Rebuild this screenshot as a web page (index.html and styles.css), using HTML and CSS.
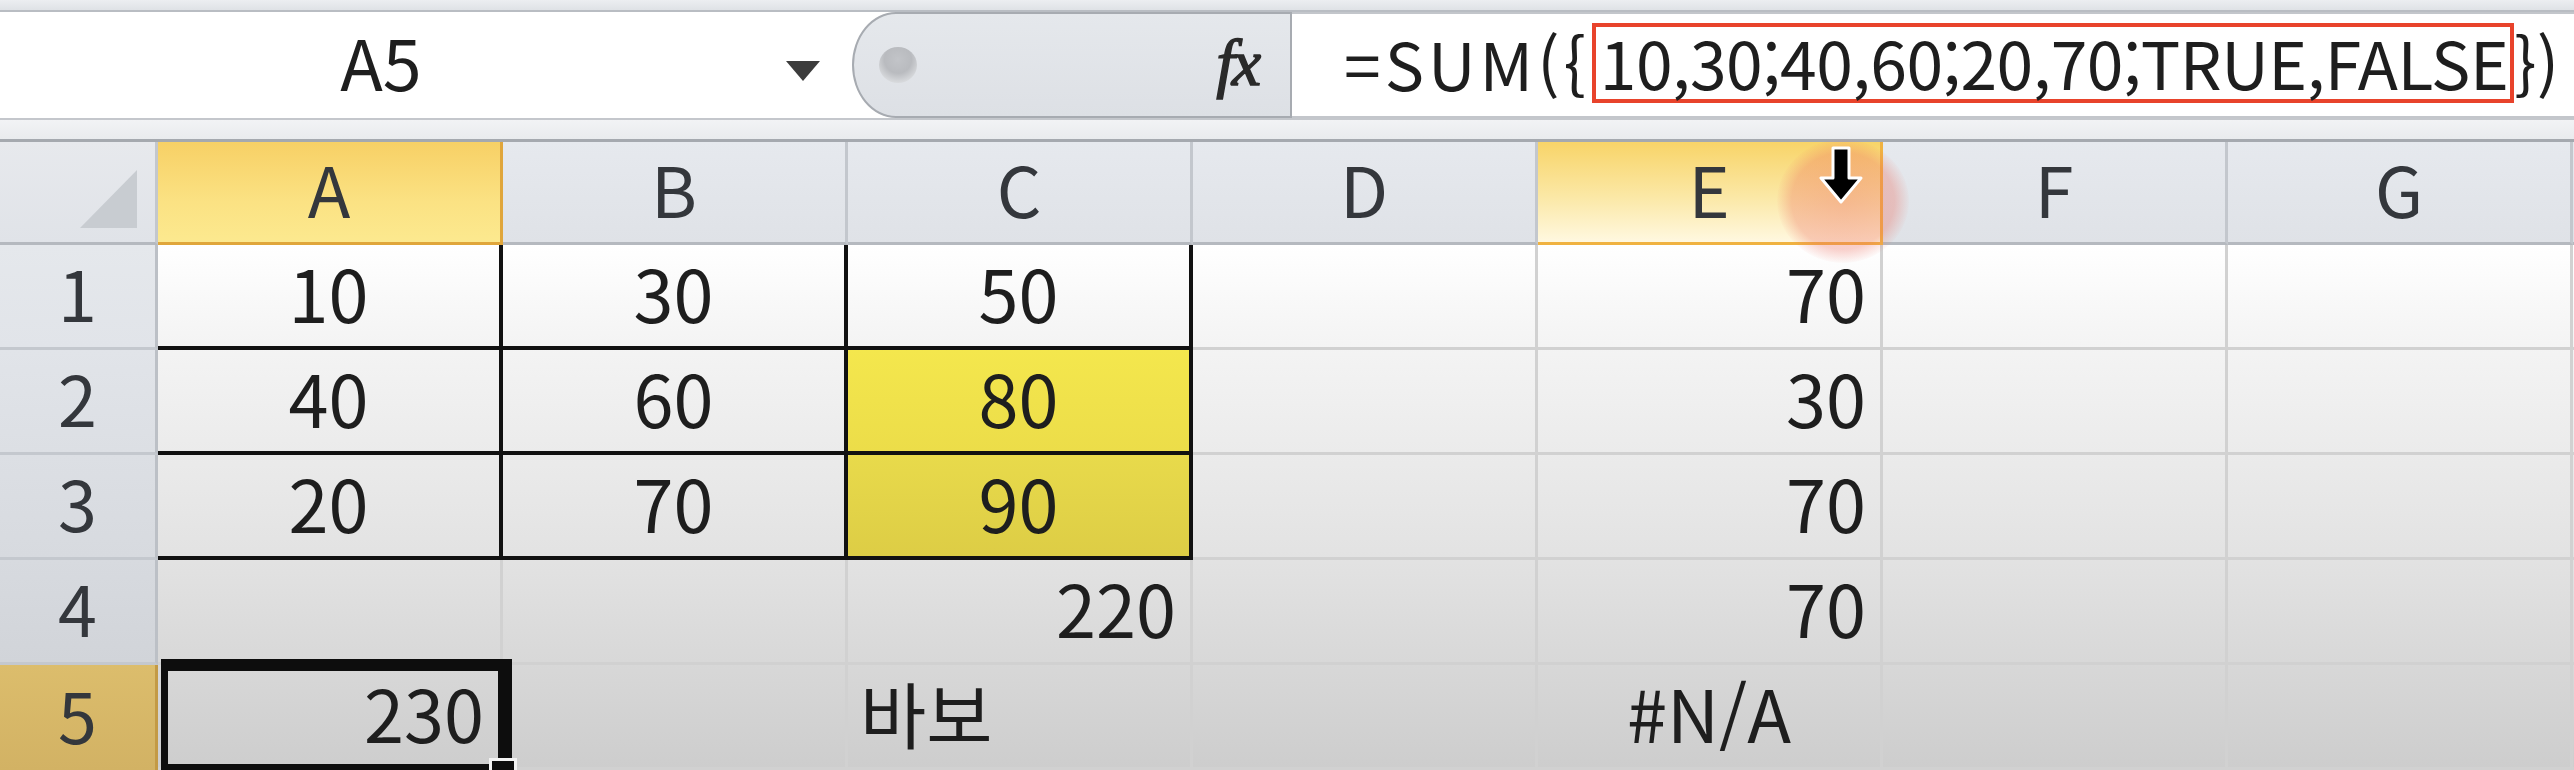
FILE: index.html
```html
<!DOCTYPE html>
<html lang="ko">
<head>
<meta charset="utf-8">
<title>Excel SUM array</title>
<link rel="stylesheet" href="styles.css">
</head>
<body>
<div class="app">
  <div class="topband"></div>
  <div class="fbar">
    <div class="namebox">
      <span class="name">A5</span>
      <span class="dd"></span>
    </div>
    <div class="fxzone">
      <span class="knob"></span>
      <span class="fx">fx</span>
    </div>
    <div class="formula"><span class="pre">=SUM({</span><span class="hl">10,30;40,60;20,70;TRUE,FALSE</span>})</div>
  </div>
  <div class="band"></div>
  <div class="sheet">
    <div class="corner"></div>
    <div class="ch sel">A</div>
    <div class="ch">B</div>
    <div class="ch">C</div>
    <div class="ch">D</div>
    <div class="ch hov">E</div>
    <div class="ch">F</div>
    <div class="ch">G</div>
    <div class="ch rest"></div>

    <div class="rh r1">1</div>
    <div class="cell c bk">10</div>
    <div class="cell c bk">30</div>
    <div class="cell c bk">50</div>
    <div class="cell"></div>
    <div class="cell r">70</div>
    <div class="cell"></div>
    <div class="cell"></div>
    <div class="cell rest"></div>

    <div class="rh r2">2</div>
    <div class="cell c bk">40</div>
    <div class="cell c bk">60</div>
    <div class="cell c bk y1">80</div>
    <div class="cell"></div>
    <div class="cell r">30</div>
    <div class="cell"></div>
    <div class="cell"></div>
    <div class="cell rest"></div>

    <div class="rh r3">3</div>
    <div class="cell c bk">20</div>
    <div class="cell c bk">70</div>
    <div class="cell c bk y2">90</div>
    <div class="cell"></div>
    <div class="cell r">70</div>
    <div class="cell"></div>
    <div class="cell"></div>
    <div class="cell rest"><span class="mark m1"></span></div>

    <div class="rh r4">4</div>
    <div class="cell"></div>
    <div class="cell"></div>
    <div class="cell r">220</div>
    <div class="cell"></div>
    <div class="cell r">70</div>
    <div class="cell"></div>
    <div class="cell"></div>
    <div class="cell rest"><span class="mark m2"></span></div>

    <div class="rh r5 selr">5</div>
    <div class="cell r a5">230</div>
    <div class="cell"></div>
    <div class="cell l">바보</div>
    <div class="cell"></div>
    <div class="cell c">#N/A</div>
    <div class="cell"></div>
    <div class="cell"></div>
    <div class="cell rest"></div>
  </div>

  <div class="selbox"></div>
  <div class="handle"></div>
  <div class="halo"></div>
  <svg class="cursor" width="46" height="60" viewBox="0 0 46 60">
    <path d="M14 2 H30 V32 H42 L22 56 L2 32 H14 Z" fill="#000" stroke="#fff" stroke-width="3" stroke-linejoin="round"/>
  </svg>
</div>
</body>
</html>
```
FILE: styles.css
```css
html, body {
  margin: 0;
  padding: 0;
  width: 2574px;
  height: 770px;
  overflow: hidden;
  background: #e6e8ec;
}

.app {
  position: relative;
  width: 2574px;
  height: 770px;
  font-family: "Noto Sans CJK KR", "Noto Sans", sans-serif;
  color: #1e1e1e;
}

.topband {
  height: 10px;
  background: linear-gradient(#eceef1, #dfe2e6);
  border-bottom: 2px solid #b9bdc3;
}

.fbar {
  display: flex;
  height: 106px;
  background: #fff;
}

.namebox {
  width: 852px;
  flex: none;
  display: flex;
  align-items: center;
  position: relative;
  background: #fff;
}

.name {
  position: absolute;
  left: 0;
  right: 90px;
  text-align: center;
  font-size: 70px;
  line-height: 1;
  padding-bottom: 8px;
}

.dd {
  position: absolute;
  left: 786px;
  top: 49px;
  width: 0;
  height: 0;
  border-left: 17px solid transparent;
  border-right: 17px solid transparent;
  border-top: 20px solid #3c3c3c;
}

.fxzone {
  width: 440px;
  flex: none;
  box-sizing: border-box;
  position: relative;
  background: linear-gradient(#e5e8ec, #dde0e5);
  border: 2px solid #a7abb1;
  border-radius: 44px 0 0 44px / 53px 0 0 53px;
  display: flex;
  align-items: center;
  justify-content: flex-end;
  padding-right: 32px;
}

.knob {
  position: absolute;
  left: 25px;
  top: 33px;
  width: 38px;
  height: 36px;
  border-radius: 50%;
  background: radial-gradient(circle at 50% 35%, #c2c4c8 0, #b9bbbf 45%, #d2d4d7 70%, #eceef0 100%);
}

.fx {
  font-family: "Liberation Serif", serif;
  font-style: italic;
  font-size: 66px;
  line-height: 1;
  color: #2a2a2a;
  padding-bottom: 4px;
  letter-spacing: -3px;
  -webkit-text-stroke: 1.5px #2a2a2a;
}

.formula {
  flex: 1;
  display: flex;
  align-items: center;
  padding-left: 52px;
  font-size: 66px;
  line-height: 1;
  white-space: nowrap;
  background: #fff;
  border-top: 2px solid #c3c6cb;
  border-bottom: 2px solid #c3c6cb;
  box-sizing: border-box;
  padding-bottom: 6px;
}

.pre {
  letter-spacing: 4px;
  margin-right: 2px;
}

.hl {
  display: inline-flex;
  align-items: center;
  box-sizing: border-box;
  height: 80px;
  padding: 0 2px 4px 4px;
  border: 4px solid #e8432b;
  margin-top: 2px;
  letter-spacing: -0.5px;
}

.band {
  height: 19px;
  background: linear-gradient(#f2f3f5, #e9ebee);
  border-top: 2px solid #c4c7cc;
  border-bottom: 3px solid #a5a9af;
}

.sheet {
  display: grid;
  grid-template-columns: 158px repeat(7, 345px) 1fr;
  grid-template-rows: 103px repeat(5, 105px);
  background: linear-gradient(to bottom, #e4e7ec 0, #e4e7ec 103px, #ffffff 103px, #f4f4f4 200px, #e2e2e2 420px, #cdcdcd 628px);
}

.corner {
  position: relative;
  box-sizing: border-box;
  background: linear-gradient(#e7e9ed, #e0e3e8);
  border-right: 3px solid #c3c7cd;
  border-bottom: 3px solid #b5b9bf;
}

.corner::after {
  content: "";
  position: absolute;
  left: 80px;
  top: 28px;
  width: 57px;
  height: 58px;
  background: #c8ccd1;
  clip-path: polygon(100% 0, 100% 100%, 0 100%);
}

.ch {
  box-sizing: border-box;
  display: flex;
  align-items: center;
  justify-content: center;
  font-size: 70px;
  line-height: 1;
  padding-bottom: 8px;
  color: #34373c;
  background: linear-gradient(#e6e9ee, #dfe2e7);
  border-right: 3px solid #c3c7cd;
  border-bottom: 3px solid #b5b9bf;
}

.ch.sel {
  background: linear-gradient(#f7d065, #fbe283 60%, #fce98f);
  border-left: 3px solid #e0a63b;
  border-right: 3px solid #e0a63b;
  border-bottom: 3px solid #e0a63b;
  margin-left: -3px;
}

.ch.hov {
  background: linear-gradient(#f8d468, #fbe8a6 55%, #fff8e0);
  border-right: 3px solid #f0b240;
  border-bottom: 3px solid #f0b240;
}

.ch.rest {
  border-right: none;
}

.rh {
  box-sizing: border-box;
  display: flex;
  align-items: center;
  justify-content: center;
  font-size: 70px;
  line-height: 1;
  padding-bottom: 8px;
  color: #34373c;
  border-right: 3px solid #bcc0c6;
  border-bottom: 3px solid #c4c8ce;
}

.rh.r1 { background: linear-gradient(#e5e8ec, #e1e4e9); }
.rh.r2 { background: linear-gradient(#e1e4e9, #dcdfe4); }
.rh.r3 { background: linear-gradient(#dcdfe4, #d7dadf); }
.rh.r4 { background: linear-gradient(#d7dadf, #d1d4d9); }
.rh.selr {
  background: linear-gradient(#dcbd6c, #d2b264);
  border-right: 3px solid #c39a45;
  border-bottom: none;
}

.cell {
  box-sizing: border-box;
  display: flex;
  align-items: center;
  font-size: 72px;
  line-height: 1;
  padding: 0 14px 8px 14px;
  border-right: 3px solid #d1d1d1;
  border-bottom: 3px solid #d1d1d1;
  white-space: nowrap;
}

.cell.rest {
  border-right: none;
  position: relative;
}

.c { justify-content: center; }
.r { justify-content: flex-end; }
.l { justify-content: flex-start; padding-left: 12px; }

.cell.bk {
  border-right: 4px solid #111;
  border-bottom: 4px solid #111;
}

.cell.y1 {
  background: linear-gradient(#f4e74d, #ecdd49);
}

.cell.y2 {
  background: linear-gradient(#e8da4b, #ddcd45);
}

.cell.a5 {
  padding-right: 16px;
}

.mark {
  position: absolute;
  right: 0;
  width: 4px;
  background: #2f8a3a;
}

.m1 { top: 12px; height: 10px; }
.m2 { top: 0; height: 24px; }

.selbox {
  position: absolute;
  left: 161px;
  top: 659px;
  width: 351px;
  height: 117px;
  box-sizing: border-box;
  border-style: solid;
  border-color: #0d0d0d;
  border-width: 12px 14px 12px 7px;
}

.handle {
  position: absolute;
  left: 489px;
  top: 758px;
  width: 22px;
  height: 22px;
  background: #0d0d0d;
  border: 3px solid #f2f2f2;
}

.halo {
  position: absolute;
  left: 1777px;
  top: 139px;
  width: 132px;
  height: 124px;
  border-radius: 50%;
  background: radial-gradient(ellipse at center, rgba(236, 110, 95, 0.40) 0, rgba(236, 110, 95, 0.33) 55%, rgba(236, 110, 95, 0) 72%);
  pointer-events: none;
}

.cursor {
  position: absolute;
  left: 1819px;
  top: 146px;
}
```
